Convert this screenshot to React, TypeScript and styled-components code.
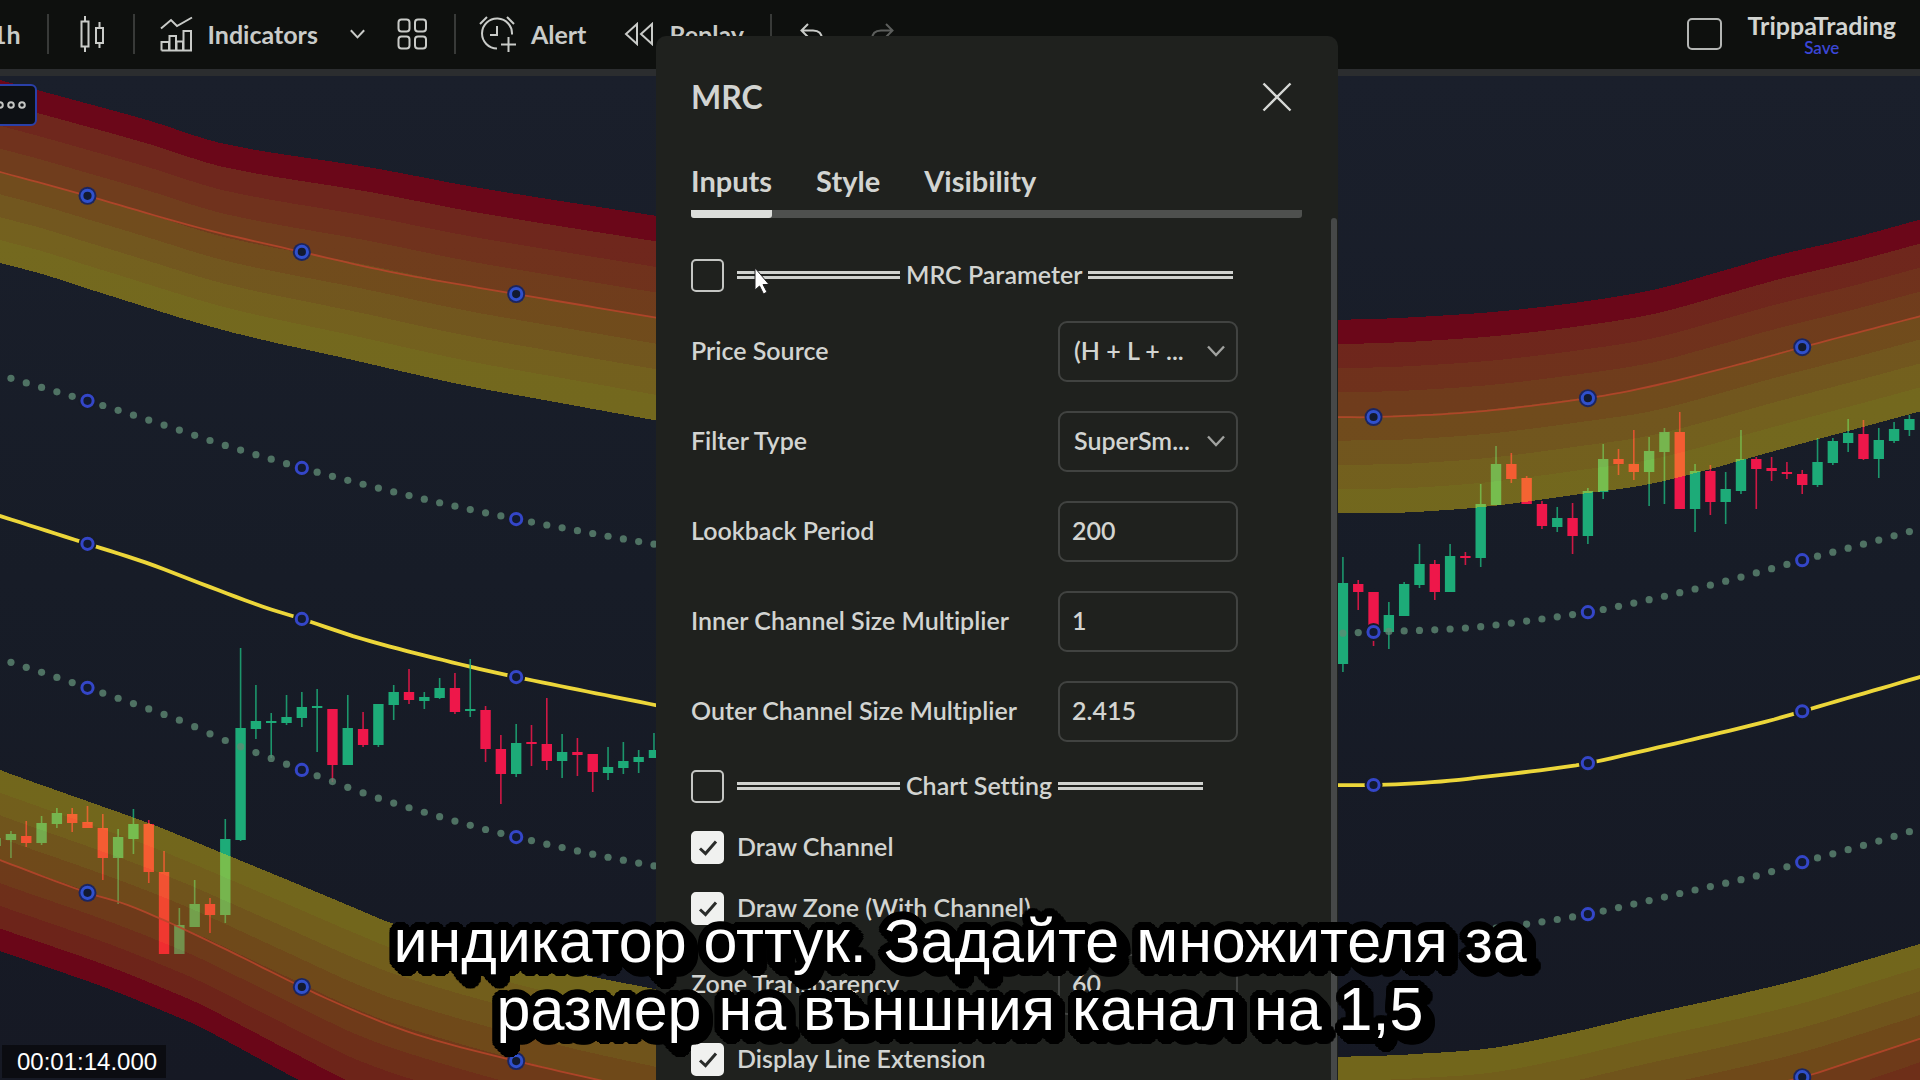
import React from "react";
import styled, { createGlobalStyle } from "styled-components";

/* ---------- chart data ---------- */

type Point = [number, number];

const STEP = 15.31;
const ORIGIN = 87.5;
const xAt = (k: number) => ORIGIN + STEP * k;

// Each series is sampled in two stretches: before and after the settings dialog.
const mean: Point[][] = [
  [[-20, 510], [0, 516], [88, 544], [147, 563], [210, 587], [261, 606], [302, 619], [366, 640], [455, 663], [516, 677], [670, 708]],
  [[1320, 785], [1374, 785], [1435, 782], [1492, 776], [1550, 769], [1589, 763], [1634, 753], [1703, 737], [1772, 720], [1803, 711], [1920, 677], [1940, 671]],
];
const innerTop: Point[][] = [
  [[-20, 368], [10, 378], [88, 401], [133, 415], [179, 430], [224, 445], [302, 468], [378, 488], [454, 506], [516, 519], [590, 533], [670, 547]],
  [[1320, 634], [1374, 632], [1450, 629], [1496, 625], [1589, 612], [1634, 603], [1695, 589], [1756, 573], [1803, 560], [1879, 540], [1940, 523]],
];
const innerBottom: Point[][] = [
  [[-20, 653], [10, 662], [88, 688], [179, 720], [224, 740], [302, 770], [378, 798], [469, 825], [516, 837], [592, 854], [670, 869]],
  [[1320, 938], [1374, 937], [1450, 933], [1527, 924], [1589, 914], [1634, 904], [1695, 890], [1756, 876], [1803, 862], [1879, 841], [1940, 822]],
];
const upperOuter: Point[][] = [
  [[-20, 74], [0, 80], [37, 90], [147, 120], [225, 144], [373, 168], [480, 188], [670, 218]],
  [[1320, 320], [1374, 319], [1435, 316], [1504, 311], [1588, 301], [1657, 289], [1722, 271], [1779, 255], [1856, 237], [1940, 214]],
];
const upperInner: Point[][] = [
  [[-20, 258], [0, 263], [42, 274], [95, 291], [223, 330], [353, 360], [463, 385], [555, 402], [670, 423]],
  [[1320, 513], [1374, 513], [1416, 512], [1492, 506], [1588, 493], [1645, 485], [1703, 471], [1760, 455], [1837, 434], [1940, 406]],
];
const upperLine: Point[][] = [
  [[-20, 167], [0, 172], [88, 196], [200, 228], [302, 252], [396, 273], [516, 294], [670, 320]],
  [[1320, 417], [1374, 417], [1473, 412], [1589, 398], [1657, 385], [1752, 361], [1803, 347], [1940, 311]],
];
const lowerInner: Point[][] = [
  [[-20, 761], [0, 770], [84, 800], [151, 824], [227, 855], [295, 883], [362, 911], [391, 923], [490, 952], [585, 975], [670, 992]],
  [[1320, 1057], [1374, 1056], [1416, 1054], [1492, 1048], [1569, 1033], [1645, 1015], [1722, 998], [1798, 980], [1856, 963], [1940, 938]],
];
const lowerLine: Point[][] = [
  [[-20, 851], [0, 860], [88, 893], [122, 903], [168, 922], [223, 948], [302, 987], [362, 1014], [421, 1036], [516, 1061], [670, 1096]],
  [[1320, 1153], [1492, 1146], [1645, 1113], [1722, 1096], [1803, 1077], [1856, 1060], [1940, 1032]],
];
const lowerOuter: Point[][] = [
  [[-20, 943], [0, 951], [101, 986], [168, 1013], [202, 1028], [295, 1078], [362, 1112], [516, 1160], [670, 1200]],
  [[1320, 1249], [1492, 1244], [1645, 1211], [1803, 1174], [1940, 1126]],
];

const valueAt = (points: Point[], x: number) => {
  const last = points.length - 1;
  let i = 0;
  while (i < last - 1 && points[i + 1][0] < x) i += 1;
  const slope = (j: number) => {
    const a = points[Math.max(0, j - 1)];
    const b = points[Math.min(last, j + 1)];
    return (b[1] - a[1]) / (b[0] - a[0]);
  };
  const [x0, y0] = points[i];
  const [x1, y1] = points[i + 1];
  const h = x1 - x0;
  const t = (x - x0) / h;
  const t2 = t * t;
  const t3 = t2 * t;
  return (
    (2 * t3 - 3 * t2 + 1) * y0 +
    (t3 - 2 * t2 + t) * h * slope(i) +
    (3 * t2 - 2 * t3) * y1 +
    (t3 - t2) * h * slope(i + 1)
  );
};

const samples = (side: number) => {
  const [from, to] = side === 0 ? [-16, 668] : [1324, 1936];
  const xs: number[] = [];
  for (let x = from; x <= to; x += 9) xs.push(x);
  return xs;
};

const linePath = (series: Point[][], side: number) =>
  samples(side)
    .map((x, i) => `${i ? "L" : "M"}${x} ${valueAt(series[side], x).toFixed(1)}`)
    .join("");

const slicePath = (outer: Point[][], inner: Point[][], side: number, from: number, to: number) => {
  const xs = samples(side);
  const edge = (x: number, f: number) => {
    const a = valueAt(outer[side], x);
    const b = valueAt(inner[side], x);
    return `${x} ${(a + (b - a) * f).toFixed(1)}`;
  };
  return `M${xs.map((x) => edge(x, from)).join("L")}L${[...xs].reverse().map((x) => edge(x, to)).join("L")}Z`;
};

const heat = [
  "rgba(135,0,20,0.75)",
  "rgba(240,52,10,0.4)",
  "rgba(242,80,10,0.4)",
  "rgba(242,108,10,0.4)",
  "rgba(246,146,10,0.4)",
  "rgba(248,172,14,0.4)",
  "rgba(252,198,14,0.4)",
  "rgba(252,218,14,0.4)",
];

// index, direction (1 up, 0 down), body top, body bottom, wick top, wick bottom
type Candle = [number, 0 | 1, number, number, number, number];
const candles: Candle[] = [
  [-6, 1, 838, 846, 836, 848], [-5, 1, 834, 840, 831, 858], [-4, 0, 836, 843, 821, 847], [-3, 1, 823, 843, 816, 845],
  [-2, 1, 813, 824, 808, 828], [-1, 0, 814, 823, 808, 832], [0, 0, 822, 828, 806, 828], [1, 0, 828, 858, 814, 880],
  [2, 1, 837, 858, 829, 904], [3, 1, 824, 839, 809, 854], [4, 0, 824, 872, 820, 883], [5, 0, 872, 954, 851, 954],
  [6, 1, 925, 954, 908, 954], [7, 1, 904, 927, 880, 927], [8, 0, 904, 915, 898, 933], [9, 1, 839, 915, 819, 923],
  [10, 1, 728, 840, 648, 841], [11, 1, 721, 729, 685, 739], [12, 1, 721, 723, 713, 758], [13, 1, 717, 723, 695, 725],
  [14, 1, 707, 718, 692, 727], [15, 1, 706, 708, 689, 752], [16, 0, 709, 765, 709, 782], [17, 1, 728, 765, 695, 765],
  [18, 0, 729, 745, 712, 747], [19, 1, 704, 745, 704, 747], [20, 1, 692, 705, 685, 720], [21, 0, 692, 700, 669, 704],
  [22, 1, 697, 701, 692, 709], [23, 1, 688, 698, 678, 699], [24, 0, 688, 712, 673, 714], [25, 1, 709, 711, 659, 717],
  [26, 0, 710, 749, 706, 762], [27, 0, 749, 774, 735, 804], [28, 1, 743, 774, 724, 777], [29, 0, 742, 744, 725, 766],
  [30, 0, 744, 761, 698, 770], [31, 1, 752, 761, 734, 778], [32, 0, 752, 755, 738, 776], [33, 0, 754, 772, 754, 792],
  [34, 1, 767, 773, 747, 780], [35, 1, 761, 768, 742, 774], [36, 1, 757, 762, 750, 773], [37, 1, 750, 758, 733, 758],
  [82, 1, 583, 664, 557, 672], [83, 0, 584, 592, 580, 610], [84, 0, 592, 630, 592, 646], [85, 1, 615, 632, 602, 649],
  [86, 1, 584, 616, 582, 616], [87, 1, 564, 585, 544, 588], [88, 0, 564, 592, 560, 600], [89, 1, 556, 592, 544, 592],
  [90, 0, 556, 558, 552, 565], [91, 1, 504, 558, 484, 567], [92, 1, 464, 505, 446, 505], [93, 0, 464, 479, 453, 483],
  [94, 0, 478, 504, 476, 504], [95, 0, 504, 526, 501, 529], [96, 1, 518, 527, 507, 532], [97, 0, 518, 536, 503, 554],
  [98, 1, 491, 536, 488, 544], [99, 1, 459, 492, 444, 499], [100, 0, 459, 464, 449, 475], [101, 0, 464, 472, 430, 480],
  [102, 1, 451, 472, 437, 506], [103, 1, 432, 452, 428, 504], [104, 0, 432, 509, 412, 509], [105, 1, 471, 509, 464, 532],
  [106, 0, 471, 502, 465, 515], [107, 1, 489, 502, 472, 524], [108, 1, 459, 491, 430, 494], [109, 0, 459, 469, 457, 509],
  [110, 0, 468, 471, 457, 481], [111, 0, 472, 474, 462, 479], [112, 0, 474, 485, 470, 494], [113, 1, 462, 485, 438, 487],
  [114, 1, 441, 463, 438, 465], [115, 1, 433, 443, 419, 452], [116, 0, 434, 459, 420, 460], [117, 1, 440, 459, 428, 478],
  [118, 1, 429, 441, 422, 443], [119, 1, 419, 430, 415, 436],
];

const UP = "#1dab78";
const DOWN = "#ee174a";
const anchorIndexes = [0, 14, 28, 84, 98, 112];
const sideOf = (k: number) => (k < 60 ? 0 : 1);
const dotIndexes = [
  ...Array.from({ length: 44 }, (_, i) => i - 5),
  ...Array.from({ length: 38 }, (_, i) => i + 82),
].filter((k) => !anchorIndexes.includes(k));

/* ---------- shell ---------- */

const GlobalStyle = createGlobalStyle`
  *, *::before, *::after { box-sizing: border-box; }
  body { margin: 0; background: #0e100e; }
  button, input, select { font: inherit; color: inherit; }
`;

const Page = styled.div`
  position: relative;
  display: flex;
  flex-direction: column;
  height: 100vh;
  overflow: hidden;
  color: #d2d4d1;
  font-family: "Trebuchet MS", Lato, "Open Sans", sans-serif;
  font-size: 25px;
  font-weight: 600;
  font-variant-ligatures: none;
`;

const Toolbar = styled.header`
  display: flex;
  align-items: center;
  height: 76px;
  flex: none;
  padding: 0 24px 2px 0;
  background: #0e100e;
  border-bottom: 7px solid #2b2d2f;
`;

const ToolButton = styled.button<{ $before?: number; $dim?: boolean }>`
  display: flex;
  align-items: center;
  gap: 15px;
  margin: 0 0 0 ${(p) => p.$before ?? 0}px;
  padding: 0;
  border: 0;
  background: none;
  color: ${(p) => (p.$dim ? "#5c5e5c" : "#c9cbc8")};
  font-weight: 700;
  font-size: 25px;
  line-height: 32px;
  white-space: nowrap;
`;

const Divider = styled.span<{ $before: number }>`
  width: 2px;
  height: 40px;
  margin-left: ${(p) => p.$before}px;
  background: #383a38;
`;

const Spacer = styled.span`
  flex: 1;
`;

const LayoutToggle = styled.input`
  appearance: none;
  width: 35px;
  height: 32px;
  margin: 0 26px 0 0;
  border: 2px solid #b4b6b4;
  border-radius: 5px;
`;

const Account = styled.div`
  display: flex;
  flex-direction: column;
  align-items: center;
  font-weight: 700;
  line-height: 28px;
`;

const SaveLink = styled.a`
  color: #3b46d6;
  font-size: 17px;
  font-weight: 600;
  line-height: 18px;
  text-decoration: none;
`;

const ChartArea = styled.main`
  position: relative;
  flex: 1;
  min-height: 0;
  background: linear-gradient(#1a1f2b, #171c27 50%, #161924);
`;

const ChartSvg = styled.svg`
  display: block;
  width: 100%;
  height: 100%;
`;

const MoreButton = styled.button`
  position: absolute;
  top: 8px;
  left: -20px;
  display: flex;
  align-items: center;
  justify-content: flex-end;
  width: 57px;
  height: 42px;
  padding: 0 9px;
  border: 2px solid #2a40a8;
  border-radius: 6px;
  background: #0d1014;
`;

/* ---------- dialog ---------- */

const Dialog = styled.section`
  position: absolute;
  top: 36px;
  bottom: 0;
  left: 656px;
  display: flex;
  flex-direction: column;
  width: 682px;
  overflow: hidden;
  border-radius: 10px 10px 0 0;
  background: #1f211e;
`;

const DialogHeader = styled.div`
  display: flex;
  align-items: center;
  justify-content: space-between;
  padding: 37px 46px 0 35px;
`;

const Title = styled.h2`
  margin: 0;
  font-size: 32px;
  font-weight: 700;
  line-height: 48px;
`;

const IconButton = styled.button`
  display: flex;
  padding: 0;
  border: 0;
  background: none;
`;

const Tabs = styled.div`
  display: flex;
  gap: 44px;
  margin: 38px 36px 0 35px;
  border-bottom: 8px solid #4e504e;
  border-radius: 3px;
`;

const Tab = styled.button<{ $active?: boolean }>`
  margin: 0 0 -8px;
  padding: 0 0 7px;
  border: 0;
  border-bottom: 8px solid ${(p) => (p.$active ? "#dcdedb" : "transparent")};
  border-radius: 3px;
  background: none;
  font-size: 29px;
  font-weight: 700;
  line-height: 44px;
`;

const Body = styled.div`
  display: flex;
  justify-content: space-between;
  flex: 1;
  min-height: 0;
`;

const Fields = styled.div`
  width: 582px;
  padding: 27px 0 0 35px;
`;

const ScrollThumb = styled.div`
  width: 6px;
  margin-right: 1px;
  border-radius: 3px 3px 0 0;
  background: #464848;
`;

const CheckRow = styled.label`
  display: flex;
  align-items: center;
  gap: 13px;
  height: 61px;
  white-space: nowrap;
`;

const CheckCell = styled.span`
  display: grid;
  flex: none;
  place-items: center;
  > * {
    grid-area: 1 / 1;
  }
`;

const CheckInput = styled.input`
  appearance: none;
  width: 33px;
  height: 33px;
  margin: 0;
  border: 2px solid #c4c6c3;
  border-radius: 5px;
  &:checked {
    border-color: #f0f1ef;
    background: #f0f1ef;
  }
`;

const CheckText = styled.span`
  display: flex;
  align-items: center;
  gap: 6px;
  padding-bottom: 4px;
`;

const DoubleRule = styled.span<{ $width: number }>`
  width: ${(p) => p.$width}px;
  height: 8px;
  margin-top: 2px;
  border: solid #d0d2cf;
  border-width: 3px 0;
`;

const FieldRow = styled.div`
  display: grid;
  grid-template-columns: 1fr 180px;
  align-items: center;
  height: 90px;
  white-space: nowrap;
  > label {
    padding-bottom: 2px;
  }
`;

const Box = styled.div`
  display: grid;
  align-items: center;
  > * {
    grid-area: 1 / 1;
  }
  > svg {
    justify-self: end;
    margin-right: 13px;
    pointer-events: none;
  }
`;

const TextField = styled.input`
  width: 100%;
  height: 61px;
  padding: 0 12px 2px;
  border: 2px solid #414341;
  border-radius: 9px;
  background: transparent;
`;

const SelectField = styled.select`
  appearance: none;
  width: 100%;
  height: 61px;
  padding: 0 14px 2px;
  border: 2px solid #414341;
  border-radius: 9px;
  background: transparent;
`;

/* ---------- overlays ---------- */

const Pointer = styled.svg`
  position: absolute;
  top: 267px;
  left: 753px;
`;

const ring = (radius: number, dx: number, dy: number) =>
  Array.from({ length: 28 }, (_, i) => {
    const a = (i / 28) * Math.PI * 2;
    return `${Math.round(Math.cos(a) * radius + dx)}px ${Math.round(Math.sin(a) * radius + dy)}px 0 #000`;
  });
const outline = [...ring(4, 0, 0), ...ring(8, 0, 0), ...ring(8, 3, 3), ...ring(8, 6, 6)].join(", ");

const Caption = styled.p`
  position: absolute;
  right: 0;
  bottom: 37px;
  left: 0;
  margin: 0;
  color: #fff;
  font-family: Arial, "Liberation Sans", sans-serif;
  font-size: 61px;
  font-weight: 400;
  line-height: 68px;
  text-align: center;
  text-shadow: ${outline};
`;

const Timecode = styled.time`
  position: absolute;
  bottom: 2px;
  left: 2px;
  padding: 0 9px 0 15px;
  background: rgba(8, 10, 14, 0.82);
  color: #fff;
  font-family: Arial, "Liberation Sans", sans-serif;
  font-size: 24px;
  font-weight: 400;
  line-height: 33px;
`;

/* ---------- pieces ---------- */

const Chevron = ({ width = 18, color = "#a0a29f" }: { width?: number; color?: string }) => (
  <svg width={width} height="12" viewBox="0 0 18 12" fill="none" stroke={color} strokeWidth="2.4">
    <path d="M1 1.5 9 10 17 1.5" />
  </svg>
);

const Check = ({ label, checked, children }: { label: string; checked?: boolean; children?: React.ReactNode }) => (
  <CheckRow>
    <CheckCell>
      <CheckInput type="checkbox" defaultChecked={checked} aria-label={label} />
      {checked && (
        <svg width="20" height="18" viewBox="0 0 20 18" fill="none" stroke="#2a2c2a" strokeWidth="3">
          <path d="M2 9.5 7.5 14.5 18 2.5" />
        </svg>
      )}
    </CheckCell>
    <CheckText>{children ?? label}</CheckText>
  </CheckRow>
);

const Section = ({ name }: { name: string }) => (
  <Check label={name}>
    <DoubleRule $width={163} />
    {name}
    <DoubleRule $width={145} />
  </Check>
);

const NumberRow = ({ id, label, value }: { id: string; label: string; value: string }) => (
  <FieldRow>
    <label htmlFor={id}>{label}</label>
    <Box>
      <TextField id={id} defaultValue={value} />
    </Box>
  </FieldRow>
);

const SelectRow = ({ id, label, value }: { id: string; label: string; value: string }) => (
  <FieldRow>
    <label htmlFor={id}>{label}</label>
    <Box>
      <SelectField id={id} defaultValue={value}>
        <option>{value}</option>
      </SelectField>
      <Chevron />
    </Box>
  </FieldRow>
);

const Anchor = ({ x, y, banded }: { x: number; y: number; banded?: boolean }) => (
  <g>
    <circle cx={x} cy={y} r="9" fill={banded ? "#1b2560" : "#171c27"} />
    <circle cx={x} cy={y} r="5.6" fill="#121a30" stroke={banded ? "#3050cc" : "#3446c8"} strokeWidth="3" />
  </g>
);

const Chart = () => (
  <ChartSvg viewBox="0 76 1920 1004" preserveAspectRatio="xMidYMin slice" aria-label="Price chart">
    {[0, 1].map((side) => (
      <path key={side} d={linePath(mean, side)} fill="none" stroke="#ecd63a" strokeWidth="3.8" />
    ))}
    {candles.map(([k, up, top, bottom, high, low]) => (
      <g key={k} fill={up ? UP : DOWN}>
        <rect x={xAt(k) - 0.8} y={high} width="1.6" height={low - high} opacity="0.85" />
        <rect x={xAt(k) - 5.2} y={top} width="10.4" height={bottom - top} />
      </g>
    ))}
    {[innerTop, innerBottom].map((series, s) =>
      dotIndexes.map((k) => (
        <circle key={`${s}-${k}`} cx={xAt(k)} cy={valueAt(series[sideOf(k)], xAt(k))} r="3.6" fill="#5f8a74" opacity="0.78" />
      )),
    )}
    {[0, 1].map((side) =>
      heat.map((color, i) => (
        <g key={`${side}-${i}`} fill={color} shapeRendering="crispEdges">
          <path d={slicePath(upperOuter, upperInner, side, i / 8, (i + 1) / 8)} />
          <path d={slicePath(lowerOuter, lowerInner, side, i / 8, (i + 1) / 8)} />
        </g>
      )),
    )}
    {[0, 1].map((side) => (
      <g key={side} fill="none" stroke="#b8452c" strokeWidth="1.8" strokeOpacity="0.85">
        <path d={linePath(upperLine, side)} />
        <path d={linePath(lowerLine, side)} />
      </g>
    ))}
    {anchorIndexes.map((k) => {
      const x = xAt(k);
      const side = sideOf(k);
      return (
        <g key={k}>
          {[mean, innerTop, innerBottom].map((series, i) => (
            <Anchor key={i} x={x} y={valueAt(series[side], x)} />
          ))}
          {[upperLine, lowerLine].map((series, i) => (
            <Anchor key={i} x={x} y={valueAt(series[side], x)} banded />
          ))}
        </g>
      );
    })}
  </ChartSvg>
);

const CandlesIcon = () => (
  <svg width="25" height="38" viewBox="0 0 25 38" fill="none" stroke="currentColor" strokeWidth="2">
    <path d="M1.5 6.5h7v25h-7zM5 1v5.500M5 31.500V37M16 13h7v15h-7zM19.500 7v6M19.500 28v5" />
  </svg>
);

const IndicatorsIcon = () => (
  <svg width="33" height="36" viewBox="0 0 33 36" fill="none" stroke="currentColor" strokeWidth="2">
    <path d="M1 12.500 11 4l6 6L32 1.500M1.500 34.500V26H9v8.500M9.500 34V20h6.500v14M16.500 34v-8.500H23V34M23.500 34V15H31v19.500H1.500" />
  </svg>
);

const GridIcon = () => (
  <svg width="31" height="32" viewBox="0 0 31 32" fill="none" stroke="currentColor" strokeWidth="2">
    <rect x="1.500" y="1.500" width="11" height="12" rx="3" />
    <rect x="18" y="1.500" width="11" height="12" rx="3" />
    <rect x="1.500" y="18.500" width="11" height="12" rx="3" />
    <rect x="18" y="18.500" width="11" height="12" rx="3" />
  </svg>
);

const AlertIcon = () => (
  <svg width="37" height="38" viewBox="0 0 37 38" fill="none" stroke="currentColor" strokeWidth="2">
    <path d="M18 33.500A15 15 0 1 1 33 19.500M18 11v9h-7M1 9l7-7M28 2l7 7M22 29.500h15M29.500 22v15" />
  </svg>
);

const ReplayIcon = () => (
  <svg width="30" height="24" viewBox="0 0 30 24" fill="none" stroke="currentColor" strokeWidth="2">
    <path d="M13 2v20L2 12zM28 2v20L17 12z" />
  </svg>
);

const ArrowIcon = ({ flip }: { flip?: boolean }) => (
  <svg width="24" height="24" viewBox="0 0 24 24" fill="none" stroke="currentColor" strokeWidth="2">
    <path d={flip ? "M16 2l6.500 6.500L16 15M22 8.500H11q-9 0-9 9V20" : "M8 2 1.500 8.500 8 15M2 8.500h11q9 0 9 9V20"} />
  </svg>
);

export default function App() {
  return (
    <Page>
      <GlobalStyle />
      <Toolbar>
        <ToolButton $before={-8}>1h</ToolButton>
        <Divider $before={26} />
        <ToolButton $before={31} aria-label="Candles"><CandlesIcon /></ToolButton>
        <Divider $before={28} />
        <ToolButton $before={25}><IndicatorsIcon />Indicators</ToolButton>
        <ToolButton $before={32} aria-label="Favorite indicators"><Chevron width={15} color="#c9cbc8" /></ToolButton>
        <ToolButton $before={32} aria-label="Templates"><GridIcon /></ToolButton>
        <Divider $before={26} />
        <ToolButton $before={23}><AlertIcon />Alert</ToolButton>
        <ToolButton $before={38}><ReplayIcon />Replay</ToolButton>
        <Divider $before={26} />
        <ToolButton $before={28} aria-label="Undo"><ArrowIcon /></ToolButton>
        <ToolButton $before={46} $dim aria-label="Redo"><ArrowIcon flip /></ToolButton>
        <Spacer />
        <LayoutToggle type="checkbox" aria-label="Layout" />
        <Account>
          TrippaTrading
          <SaveLink href="#save">Save</SaveLink>
        </Account>
      </Toolbar>
      <ChartArea>
        <Chart />
        <MoreButton aria-label="More">
          <svg width="30" height="10" viewBox="0 0 30 10" fill="none" stroke="#c4c6c3" strokeWidth="2">
            <circle cx="4" cy="5" r="2.800" />
            <circle cx="15" cy="5" r="2.800" />
            <circle cx="26" cy="5" r="2.800" />
          </svg>
        </MoreButton>
      </ChartArea>
      <Dialog role="dialog" aria-label="MRC">
        <DialogHeader>
          <Title>MRC</Title>
          <IconButton aria-label="Close">
            <svg width="30" height="30" viewBox="0 0 30 30" fill="none" stroke="#d6d8d5" strokeWidth="2.400">
              <path d="M1.500 1.500l27 27M28.500 1.500l-27 27" />
            </svg>
          </IconButton>
        </DialogHeader>
        <Tabs role="tablist">
          <Tab role="tab" aria-selected $active>Inputs</Tab>
          <Tab role="tab">Style</Tab>
          <Tab role="tab">Visibility</Tab>
        </Tabs>
        <Body>
          <Fields>
            <Section name="MRC Parameter" />
            <SelectRow id="source" label="Price Source" value="(H + L + ..." />
            <SelectRow id="filter" label="Filter Type" value="SuperSm..." />
            <NumberRow id="lookback" label="Lookback Period" value="200" />
            <NumberRow id="inner" label="Inner Channel Size Multiplier" value="1" />
            <NumberRow id="outer" label="Outer Channel Size Multiplier" value="2.415" />
            <Section name="Chart Setting" />
            <Check label="Draw Channel" checked />
            <Check label="Draw Zone (With Channel)" checked />
            <NumberRow id="transparency" label="Zone Transparency" value="60" />
            <Check label="Display Line Extension" checked />
          </Fields>
          <ScrollThumb />
        </Body>
      </Dialog>
      <Pointer width="20" height="30" viewBox="0 0 20 30">
        <path d="M2 1v22l4.500-4 4 8 3.500-2-4-7.500H16z" fill="#fff" stroke="#222" strokeWidth="1" />
      </Pointer>
      <Caption>
        индикатор оттук. Задайте множителя за
        <br />
        размер на външния канал на 1,5
      </Caption>
      <Timecode>00:01:14.000</Timecode>
    </Page>
  );
}
